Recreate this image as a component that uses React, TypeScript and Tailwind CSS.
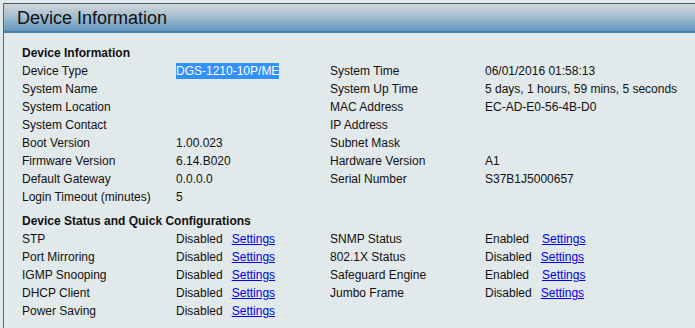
import React from 'react'

const info: [string, React.ReactNode, string, string][] = [
  ['Device Type', 'DGS-1210-10P/ME', 'System Time', '06/01/2016 01:58:13'],
  ['System Name', '', 'System Up Time', '5 days, 1 hours, 59 mins, 5 seconds'],
  ['System Location', '', 'MAC Address', 'EC-AD-E0-56-4B-D0'],
  ['System Contact', '', 'IP Address', ''],
  ['Boot Version', '1.00.023', 'Subnet Mask', ''],
  ['Firmware Version', '6.14.B020', 'Hardware Version', 'A1'],
  ['Default Gateway', '0.0.0.0', 'Serial Number', 'S37B1J5000657'],
  ['Login Timeout (minutes)', '5', '', ''],
]

const status: [string, string, string?, string?][] = [
  ['STP', 'Disabled', 'SNMP Status', 'Enabled'],
  ['Port Mirroring', 'Disabled', '802.1X Status', 'Disabled'],
  ['IGMP Snooping', 'Disabled', 'Safeguard Engine', 'Enabled'],
  ['DHCP Client', 'Disabled', 'Jumbo Frame', 'Disabled'],
  ['Power Saving', 'Disabled'],
]

const Cell = ({ children }: { children?: React.ReactNode }) => (
  <div className="h-[18px] leading-[18px] whitespace-nowrap">{children}</div>
)

const StatusValue = ({ value }: { value: string }) => (
  <>
    {value}
    <a
      href="#"
      className={`text-[#0000ee] underline ${value === 'Enabled' ? 'ml-[13px]' : 'ml-[9px]'}`}
    >
      Settings
    </a>
  </>
)

export default function App() {
  return (
    <div
      className="w-[695px] h-[328px] overflow-hidden bg-[#e2e9ea] pt-[3px] pl-[3px] text-[12px] text-[#111]"
      style={{ fontFamily: '"Liberation Sans", Arial, sans-serif' }}
    >
      <div className="h-full border-l border-[#4b6a7c] flex flex-col">
        <div className="h-[30px] border-t border-[#3f6274] border-b-2 border-b-[#4b80aa] bg-gradient-to-b from-[#d3d7d9] via-[#9fbccf] to-[#6496bd] pl-[13px] flex items-center">
          <span className="text-[18px] text-[#111] leading-none">Device Information</span>
        </div>

        <div className="pl-[18px] pt-[11px]">
          <div className="font-bold h-[18px] leading-[18px]">Device Information</div>
          <div className="grid grid-cols-[154px_154px_155px_1fr]">
            {info.map(([l1, v1, l2, v2], i) => (
              <React.Fragment key={i}>
                <Cell>{l1}</Cell>
                <Cell>
                  {i === 0 ? (
                    <span className="bg-[#3390ff] text-white py-px">{v1}</span>
                  ) : (
                    v1
                  )}
                </Cell>
                <Cell>{l2}</Cell>
                <Cell>{v2}</Cell>
              </React.Fragment>
            ))}
          </div>

          <div className="font-bold h-[18px] leading-[18px] mt-[6px]">
            Device Status and Quick Configurations
          </div>
          <div className="grid grid-cols-[154px_154px_155px_1fr]">
            {status.map(([l1, v1, l2, v2], i) => (
              <React.Fragment key={i}>
                <Cell>{l1}</Cell>
                <Cell>
                  <StatusValue value={v1} />
                </Cell>
                <Cell>{l2}</Cell>
                <Cell>{v2 && <StatusValue value={v2} />}</Cell>
              </React.Fragment>
            ))}
          </div>
        </div>
      </div>
    </div>
  )
}
